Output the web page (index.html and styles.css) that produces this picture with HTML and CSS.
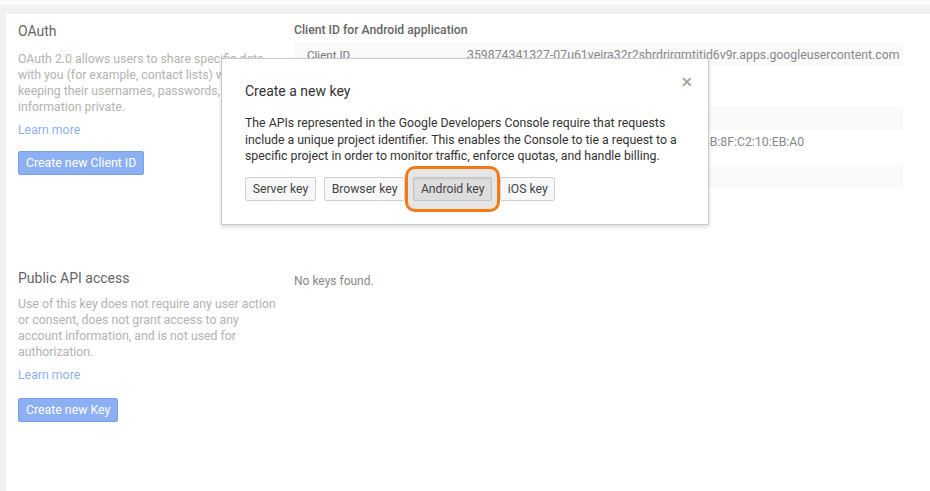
FILE: index.html
```html
<!DOCTYPE html>
<html>
<head>
<meta charset="utf-8">
<link rel="stylesheet" href="styles.css">
</head>
<body>
<div class="topbar"></div>
<div class="page">
  <div class="content">
    <section class="section first">
      <div class="left">
        <h2 class="title">OAuth</h2>
        <p class="desc">OAuth 2.0 allows users to share specific data with you (for example, contact lists) while keeping their usernames, passwords, and other information private.</p>
        <a class="learn">Learn more</a>
        <button class="primary">Create new Client ID</button>
      </div>
      <div class="right">
        <h3 class="client-head">Client ID for Android application</h3>
        <div class="table">
          <div class="row r1 striped"><span class="k">Client ID</span><span class="v">359874341327-07u61veira32r2sbrdrirqmtitid6v9r.apps.googleusercontent.com</span></div>
          <div class="row r2"></div>
          <div class="row r3 striped"></div>
          <div class="row r4"><span class="k"></span><span class="v fp">8A:3D:F0:12:7C:44:9E:B1:05:6D:2A:C7:E9:33:4B:8F:C2:10:EB:A0</span></div>
          <div class="row r5 striped"></div>
        </div>
      </div>
    </section>
    <section class="section second">
      <div class="left">
        <h2 class="title">Public API access</h2>
        <p class="desc">Use of this key does not require any user action or consent, does not grant access to any account information, and is not used for authorization.</p>
        <a class="learn">Learn more</a>
        <button class="primary">Create new Key</button>
      </div>
      <div class="right">
        <p class="nokeys">No keys found.</p>
      </div>
    </section>
  </div>

  <div class="modal">
    <span class="close">&#x2715;</span>
    <h2 class="modal-title">Create a new key</h2>
    <p class="modal-text">The APIs represented in the Google Developers Console require that requests include a unique project identifier. This enables the Console to tie a request to a specific project in order to monitor traffic, enforce quotas, and handle billing.</p>
    <div class="actions">
      <button class="btn">Server key</button>
      <button class="btn">Browser key</button>
      <span class="highlight"><button class="btn active">Android key</button></span>
      <button class="btn">iOS key</button>
    </div>
  </div>
</div>
</body>
</html>
```

FILE: styles.css
```css
html, body {
  margin: 0;
  padding: 0;
  height: 100%;
}
body {
  background: #f1f1f1;
  font-family: Roboto, "Liberation Sans", Arial, sans-serif;
  overflow: hidden;
}
.topbar {
  height: 5px;
  background: #fafafa;
}
.page {
  position: relative;
  margin: 9px 0 0 6px;
  background: #fff;
  height: 477px;
}
.content {
  padding: 7px 12px 0;
}
.section {
  display: flex;
  align-items: flex-start;
  gap: 14px;
}
.section.second {
  margin-top: 80px;
}
.left {
  width: 262px;
  flex: none;
}
.right {
  width: 609px;
  flex: none;
}
.title {
  margin: 0;
  font-size: 14px;
  line-height: 20px;
  font-weight: 400;
  color: #666;
}
.desc {
  margin: 10px 0 0;
  font-size: 12.3px;
  line-height: 16px;
  color: #b3b3b3;
}
.second .desc {
  margin-top: 8px;
}
.learn {
  display: block;
  margin-top: 7px;
  font-size: 12.3px;
  line-height: 16px;
  color: #8fb1ef;
}
.primary {
  display: block;
  margin-top: 13px;
  height: 24px;
  padding: 0 7px;
  border: 1px solid #7aa2ec;
  border-radius: 2px;
  background: #8cb0f2;
  color: #fff;
  font-family: inherit;
  font-size: 12.3px;
}
.second .primary {
  margin-top: 15px;
}
.client-head {
  margin: 0;
  font-size: 12.2px;
  line-height: 18px;
  font-weight: 500;
  color: #666;
}
.table {
  margin-top: 3px;
}
.row {
  display: flex;
  align-items: center;
  font-size: 12.3px;
  color: #888;
  padding-left: 13px;
}
.row.striped {
  background: #fafafa;
}
.r1 { height: 24px; padding-top: 2px; box-sizing: border-box; }
.r2 { height: 40px; }
.r3 { height: 24px; }
.r4 { height: 35px; align-items: flex-start; padding-top: 5px; box-sizing: border-box; }
.r5 { height: 23px; }
.k {
  width: 160px;
  flex: none;
  font-size: 11.6px;
  color: #777;
}
.v {
  white-space: nowrap;
}
.fp {
  margin-left: -7px;
}
.nokeys {
  margin: 0;
  padding-top: 5px;
  font-size: 12px;
  line-height: 16px;
  color: #888;
}

.modal {
  position: absolute;
  left: 215px;
  top: 44px;
  width: 486px;
  height: 165px;
  background: #fff;
  border: 1px solid #c9c9c9;
  box-shadow: 0 2px 4px rgba(0, 0, 0, 0.15);
}
.close {
  position: absolute;
  right: 15px;
  top: 15px;
  font-size: 14px;
  font-weight: 700;
  color: #a6a6a6;
  line-height: 16px;
}
.modal-title {
  margin: 22px 0 0 23px;
  font-size: 14px;
  line-height: 20px;
  font-weight: 400;
  color: #333;
}
.modal-text {
  margin: 14px 23px 0;
  font-size: 12.3px;
  line-height: 16.5px;
  color: #333;
}
.actions {
  display: flex;
  gap: 8px;
  margin: 12px 0 0 23px;
  position: relative;
  z-index: 0;
}
.btn {
  height: 24px;
  padding: 0 6.7px;
  border: 1px solid #d0d0d0;
  border-radius: 2px;
  background: #f8f8f8;
  color: #444;
  font-family: inherit;
  font-size: 12.2px;
}
.btn.active {
  background: #dddddd;
  border-color: #c2c2c2;
  box-shadow: inset 0 1px 2px rgba(0, 0, 0, 0.08);
  position: relative;
}
.highlight {
  position: relative;
  display: inline-flex;
}
.highlight::before {
  content: "";
  position: absolute;
  left: -8px;
  right: -8px;
  top: -11px;
  bottom: -11px;
  border: 3px solid #f57a14;
  border-radius: 10px;
  background: #e6e6e6;
  z-index: -1;
}
```
